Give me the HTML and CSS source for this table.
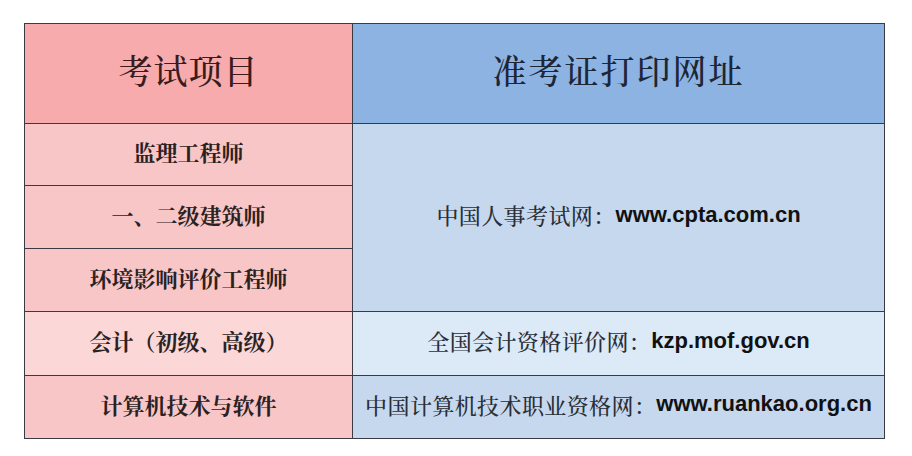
FILE: index.html
```html
<!DOCTYPE html>
<html lang="zh-CN">
<head>
<meta charset="utf-8">
<title>准考证打印网址</title>
<link rel="stylesheet" href="styles.css">
</head>
<body>
<div class="table">
  <div class="cell head head-left">考试项目</div>
  <div class="cell head head-right">准考证打印网址</div>
  <div class="cell item r2">监理工程师</div>
  <div class="cell site span3"><span class="cn">中国人事考试网：</span><span class="url">www.cpta.com.cn</span></div>
  <div class="cell item r3">一、二级建筑师</div>
  <div class="cell item r4">环境影响评价工程师</div>
  <div class="cell item light">会计（初级、高级）</div>
  <div class="cell site light-blue"><span class="cn">全国会计资格评价网：</span><span class="url">kzp.mof.gov.cn</span></div>
  <div class="cell item">计算机技术与软件</div>
  <div class="cell site"><span class="cn">中国计算机技术职业资格网：</span><span class="url">www.ruankao.org.cn</span></div>
</div>
</body>
</html>
```
FILE: styles.css
```css
html, body {
  margin: 0;
  padding: 0;
  background: #ffffff;
}

.table {
  margin: 23px 0 0 24px;
  width: 861px;
  box-sizing: border-box;
  display: grid;
  grid-template-columns: 327px 531px;
  grid-template-rows: 99px 61px 62px 62px 63px 62px;
  gap: 1px;
  padding: 1px;
  background: #3a3a44;
}

.cell {
  display: flex;
  align-items: center;
  justify-content: center;
  font-family: "Noto Serif CJK SC", "Noto Sans CJK SC", serif;
  color: #2a2222;
  white-space: nowrap;
  box-sizing: border-box;
  padding-bottom: 6px;
}

.head {
  font-size: 34px;
  font-weight: 500;
  letter-spacing: 1px;
  padding-bottom: 8px;
}

.head-left {
  background: #f8abac;
  color: #3a1c1e;
}

.head-right {
  background: #8db3e2;
  color: #1c2636;
  letter-spacing: 2px;
}

.item {
  background: #f9c6c7;
  font-size: 22px;
  font-weight: 700;
}

.item.light {
  background: #fbd7d7;
}

.site {
  background: #c6d8ee;
  font-size: 22px;
  color: #2a2e36;
}

.site.light-blue {
  background: #dce9f7;
}

.span3 {
  grid-column: 2;
  grid-row: 2 / span 3;
}

.cn {
  font-weight: 500;
  letter-spacing: 0.4px;
}

.url {
  font-family: "Liberation Sans", Arial, sans-serif;
  font-weight: 700;
  color: #111111;
}
```
